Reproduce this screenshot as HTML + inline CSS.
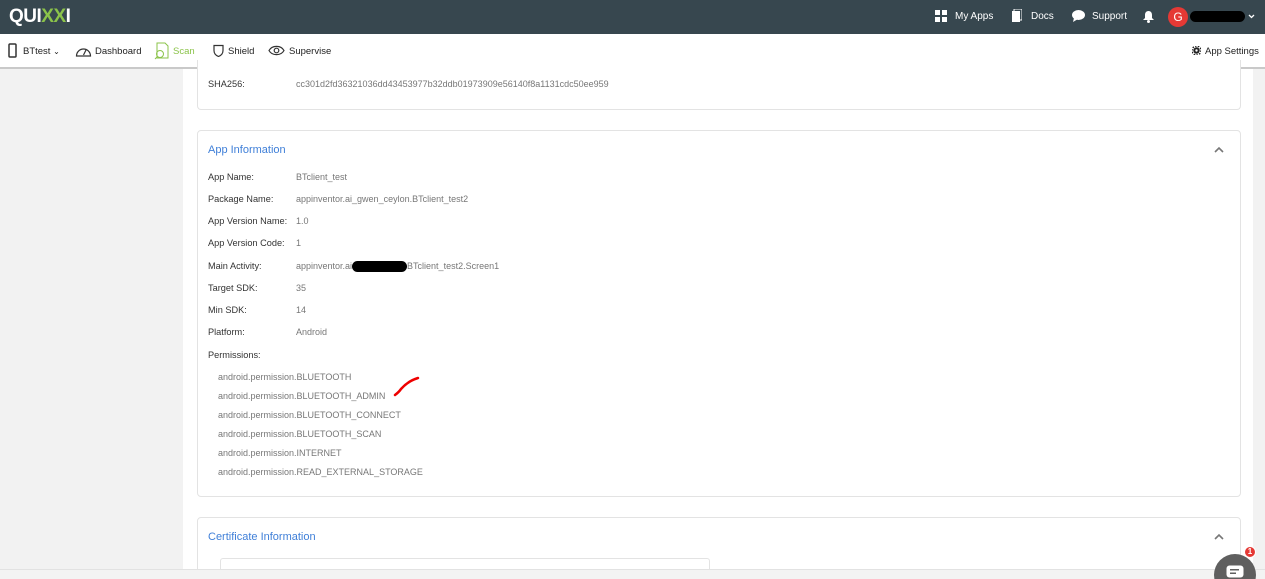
<!DOCTYPE html>
<html style="overflow:hidden;width:1265px;height:579px"><head><style>
*{box-sizing:border-box;margin:0;padding:0}
body{width:1265px;height:579px;overflow:hidden;font-family:"Liberation Sans",sans-serif;background:#fff;position:relative;color:#333}
.top{position:absolute;left:0;top:0;width:1265px;height:34px;background:#37474f;color:#fff}
.nav{position:absolute;left:0;top:34px;width:1265px;height:35px;background:#fff;border-bottom:2px solid #c9c9c9;font-size:9.5px;color:#222}
.side{position:absolute;left:0;top:69px;width:183px;height:510px;background:#f2f2f2}
.rside{position:absolute;left:1253px;top:69px;width:12px;height:510px;background:#f2f2f2}
.bot{position:absolute;left:0;top:569px;width:1265px;height:10px;background:#f3f3f3;border-top:1px solid #e2e2e2}
.card{position:absolute;left:197px;width:1044px;border:1px solid #e3e3e3;border-radius:4px;background:#fff;overflow:hidden}
.t{position:absolute;font-size:9.2px;white-space:nowrap}
.l{color:#333}.v{color:#777;font-size:9px}
.h{position:absolute;color:#3f7fd8;font-size:11px}
.ni{position:absolute;top:1px;height:35px;line-height:33px;white-space:nowrap}
</style></head><body>
<div class="top">
<div style="position:absolute;left:9px;top:6px;font-size:19px;font-weight:bold;letter-spacing:-0.5px;color:#fff">QUI<span style="color:#8bc34a">XX</span>I</div>
<svg style="position:absolute;left:935px;top:10px" width="12" height="12"><rect x="0" y="0" width="5" height="5" fill="#fff"/><rect x="7" y="0" width="5" height="5" fill="#fff"/><rect x="0" y="7" width="5" height="5" fill="#fff"/><rect x="7" y="7" width="5" height="5" fill="#fff"/></svg>
<div class="t" style="left:955px;top:11px;color:#fff;font-size:10px">My Apps</div>
<svg style="position:absolute;left:1011px;top:9px" width="11" height="14"><rect x="1" y="2" width="8" height="11" fill="#fff"/><rect x="3" y="0" width="8" height="11" fill="none" stroke="#fff"/></svg>
<div class="t" style="left:1031px;top:11px;color:#fff;font-size:10px">Docs</div>
<svg style="position:absolute;left:1072px;top:10px" width="13" height="12"><ellipse cx="6.5" cy="5" rx="6.5" ry="5" fill="#fff"/><path d="M2 8 L1 12 L6 9z" fill="#fff"/></svg>
<div class="t" style="left:1092px;top:11px;color:#fff;font-size:10px">Support</div>
<svg style="position:absolute;left:1143px;top:10px" width="11" height="13"><path d="M5.5 1C3 1 2 3 2 5v3L0 10h11L9 8V5C9 3 8 1 5.5 1z" fill="#fff"/><circle cx="5.5" cy="11.5" r="1.5" fill="#fff"/></svg>
<div style="position:absolute;left:1168px;top:7px;width:20px;height:20px;border-radius:50%;background:#e53935;color:#fff;font-size:12px;text-align:center;line-height:20px">G</div>
<div style="position:absolute;left:1190px;top:11px;width:55px;height:11px;border-radius:6px;background:#000"></div>
<svg style="position:absolute;left:1248px;top:14px" width="7" height="5"><path d="M1 1l2.5 2.5L6 1" stroke="#fff" stroke-width="1.3" fill="none"/></svg>
</div>
<div class="nav">
<svg style="position:absolute;left:8px;top:9px" width="9" height="15"><rect x="1" y="1" width="7" height="13" rx="1" fill="none" stroke="#333" stroke-width="1.5"/></svg>
<div class="ni" style="left:23px">BTtest <span style="font-size:8px">⌄</span></div>
<svg style="position:absolute;left:75px;top:11px" width="17" height="12"><path d="M1.5 11a7 7 0 0 1 14 0z" fill="none" stroke="#333" stroke-width="1.2"/><path d="M8.5 10 L11 5" stroke="#333" stroke-width="1.2"/></svg>
<div class="ni" style="left:95px">Dashboard</div>
<svg style="position:absolute;left:154px;top:8px" width="16" height="18"><path d="M3 1h8l3 3v12H3z" fill="none" stroke="#8bc34a"/><circle cx="6" cy="12" r="3.5" fill="none" stroke="#8bc34a"/><path d="M3.5 14.5L1 17" stroke="#8bc34a"/></svg>
<div class="ni" style="left:173px;color:#8bc34a">Scan</div>
<svg style="position:absolute;left:213px;top:10px" width="11" height="13"><path d="M1 1.5h9v5c0 3-2 5-4.5 6C3 11.5 1 9.5 1 6.5z" fill="none" stroke="#333" stroke-width="1.2"/></svg>
<div class="ni" style="left:228px">Shield</div>
<svg style="position:absolute;left:268px;top:11px" width="17" height="11"><path d="M1 5.5C4 0 13 0 16 5.5 13 11 4 11 1 5.5z" fill="none" stroke="#333" stroke-width="1.2"/><circle cx="8.5" cy="5.5" r="2.3" fill="none" stroke="#333" stroke-width="1.2"/></svg>
<div class="ni" style="left:289px">Supervise</div>
<svg style="position:absolute;left:1192px;top:12px" width="9" height="9"><circle cx="4.5" cy="4.5" r="3.2" fill="#222"/><circle cx="4.5" cy="4.5" r="4.5" fill="none" stroke="#222" stroke-width="1.5" stroke-dasharray="1.5 1.3"/><circle cx="4.5" cy="4.5" r="1.2" fill="#fff"/></svg>
<div class="ni" style="left:1205px">App Settings</div>
</div>
<div class="side"></div><div class="rside"></div>
<div class="card" style="top:60px;height:50px;border-top:none;border-radius:0 0 4px 4px">
<div class="t l" style="left:10px;top:19px">SHA256:</div>
<div class="t v" style="left:98px;top:19px">cc301d2fd36321036dd43453977b32ddb01973909e56140f8a1131cdc50ee959</div>
</div>
<div class="card" style="top:130px;height:367px">
<div class="h" style="left:10px;top:13px">App Information</div>
<svg style="position:absolute;left:1016px;top:15px" width="10" height="7"><path d="M1 6l4-4 4 4" stroke="#777" stroke-width="1.6" fill="none"/></svg>
<div class="t l" style="left:10px;top:41px">App Name:</div><div class="t v" style="left:98px;top:41px">BTclient_test</div>
<div class="t l" style="left:10px;top:63px">Package Name:</div><div class="t v" style="left:98px;top:63px">appinventor.ai_gwen_ceylon.BTclient_test2</div>
<div class="t l" style="left:10px;top:85px">App Version Name:</div><div class="t v" style="left:98px;top:85px">1.0</div>
<div class="t l" style="left:10px;top:107px">App Version Code:</div><div class="t v" style="left:98px;top:107px">1</div>
<div class="t l" style="left:10px;top:130px">Main Activity:</div><div class="t v" style="left:98px;top:130px">appinventor.ai<span style="display:inline-block;width:55px;height:11px;background:#000;border-radius:6px;vertical-align:middle"></span>BTclient_test2.Screen1</div>
<div class="t l" style="left:10px;top:152px">Target SDK:</div><div class="t v" style="left:98px;top:152px">35</div>
<div class="t l" style="left:10px;top:174px">Min SDK:</div><div class="t v" style="left:98px;top:174px">14</div>
<div class="t l" style="left:10px;top:196px">Platform:</div><div class="t v" style="left:98px;top:196px">Android</div>
<div class="t l" style="left:10px;top:219px">Permissions:</div>
<div class="t v" style="left:20px;top:241px">android.permission.BLUETOOTH</div>
<div class="t v" style="left:20px;top:260px">android.permission.BLUETOOTH_ADMIN</div>
<div class="t v" style="left:20px;top:279px">android.permission.BLUETOOTH_CONNECT</div>
<div class="t v" style="left:20px;top:298px">android.permission.BLUETOOTH_SCAN</div>
<div class="t v" style="left:20px;top:317px">android.permission.INTERNET</div>
<div class="t v" style="left:20px;top:336px">android.permission.READ_EXTERNAL_STORAGE</div>
<svg style="position:absolute;left:195px;top:245px" width="28" height="22"><path d="M2 19 Q6 16 8 13 Q15 5 25 2" fill="none" stroke="#e00" stroke-width="2.5" stroke-linecap="round"/></svg>
</div>
<div class="card" style="top:517px;height:70px">
<div class="h" style="left:10px;top:13px">Certificate Information</div>
<svg style="position:absolute;left:1016px;top:15px" width="10" height="7"><path d="M1 6l4-4 4 4" stroke="#777" stroke-width="1.6" fill="none"/></svg>
<div style="position:absolute;left:22px;top:40px;width:490px;height:40px;border:1px solid #e3e3e3;border-radius:3px"></div>
</div>
<div class="bot"></div>
<div style="position:absolute;left:1214px;top:554px;width:42px;height:42px;border-radius:50%;background:#5f5f5f"></div>
<svg style="position:absolute;left:1226px;top:565px" width="18" height="13"><rect x="0.5" y="0.5" width="17" height="12" rx="3" fill="#fff"/><rect x="4" y="4" width="9" height="1.5" fill="#5f5f5f"/><rect x="4" y="7.5" width="6" height="1.5" fill="#5f5f5f"/></svg>
<div style="position:absolute;left:1244px;top:546px;width:12px;height:12px;border-radius:50%;background:#e53935;border:1px solid #fff;color:#fff;font-size:8px;font-weight:bold;text-align:center;line-height:10px">1</div>
</body></html>
